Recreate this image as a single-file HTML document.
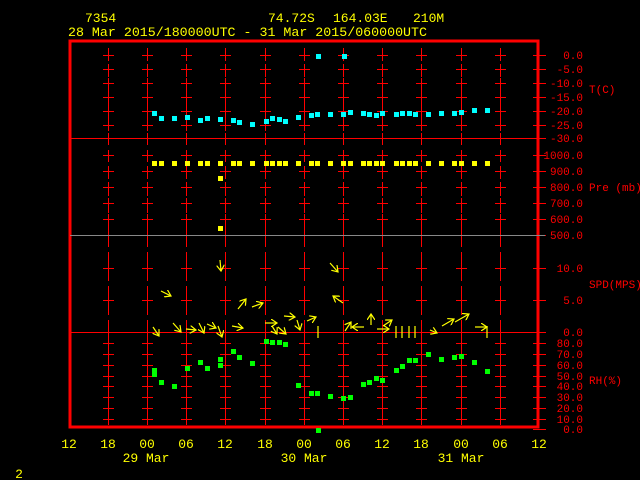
<!DOCTYPE html>
<html><head><meta charset="utf-8"><style>
html,body{margin:0;padding:0;background:#000;width:640px;height:480px;overflow:hidden}
svg{display:block}
text{font-family:"Liberation Mono",monospace}
</style></head><body>
<svg id="s" width="640" height="480" viewBox="0 0 640 480" xmlns="http://www.w3.org/2000/svg">
<defs><marker id="ah" markerWidth="8" markerHeight="8" refX="6" refY="4" orient="auto" markerUnits="userSpaceOnUse"><path d="M0,0 L6,4 L0,8" fill="none" stroke="#ff0" stroke-width="1.2"/></marker></defs>
<g fill="#ff0" font-size="13">
<text x="85" y="22">7354</text>
<text x="268" y="22">74.72S</text>
<text x="333" y="22">164.03E</text>
<text x="413" y="22">210M</text>
<text x="68" y="36" textLength="359" lengthAdjust="spacingAndGlyphs">28 Mar 2015/180000UTC - 31 Mar 2015/060000UTC</text>
</g>
<g id="grid" stroke="#f00" stroke-width="1" shape-rendering="crispEdges"></g>
<rect x="70" y="41" width="468" height="386" fill="none" stroke="#f00" stroke-width="3" shape-rendering="crispEdges"/>
<g stroke="#f00" stroke-width="1" shape-rendering="crispEdges">
<line x1="70" y1="138.5" x2="545" y2="138.5"/>
<line x1="70" y1="235.5" x2="545" y2="235.5" stroke="#888"/>
<line x1="70" y1="332.5" x2="545" y2="332.5"/>
</g>
<g id="lab" fill="#f00" font-size="11" text-anchor="end"></g>
<g fill="#f00" font-size="11">
<text x="589" y="93">T(C)</text>
<text x="589" y="191">Pre (mb)</text>
<text x="589" y="288">SPD(MPS)</text>
<text x="589" y="384">RH(%)</text>
</g>
<g id="pts" shape-rendering="crispEdges"></g>
<g id="wind" stroke="#ff0" stroke-width="1.2" fill="none"></g>
<g fill="#ff0" font-size="13" text-anchor="middle">
<text x="69" y="448">12</text><text x="108" y="448">18</text><text x="147" y="448">00</text><text x="186" y="448">06</text><text x="225" y="448">12</text><text x="265" y="448">18</text><text x="304" y="448">00</text><text x="343" y="448">06</text><text x="382" y="448">12</text><text x="421" y="448">18</text><text x="461" y="448">00</text><text x="500" y="448">06</text><text x="539" y="448">12</text>
<text x="146" y="462">29 Mar</text><text x="304" y="462">30 Mar</text><text x="461" y="462">31 Mar</text>
<text x="19" y="478">2</text>
</g>
</svg>
<script>
var NS="http://www.w3.org/2000/svg";
function el(p,t,a){var e=document.createElementNS(NS,t);for(var k in a)e.setAttribute(k,a[k]);document.getElementById(p).appendChild(e);return e;}
var xs=[108,147,186,225,265,304,343,382,421,461,500];
var ticks=[55,69,83,97,111,125,155,171,187,203,219,235,268,300,332,343,354,365,376,386,397,408,419];
var tv=["0.0","-5.0","-10.0","-15.0","-20.0","-25.0","1000.0","900.0","800.0","700.0","600.0","500.0","10.0","5.0","0.0","80.0","70.0","60.0","50.0","40.0","30.0","20.0","10.0"];
xs.forEach(function(x){
  var xx=x+0.5;
  el("grid","line",{x1:xx,y1:48,x2:xx,y2:425,"stroke-dasharray":"12,5"});
  ticks.forEach(function(y){var yy=y+0.5;el("grid","line",{x1:x-5,y1:yy,x2:x+6,y2:yy});el("grid","line",{x1:xx,y1:y-5,x2:xx,y2:y+6});});
});
ticks.concat([138,429]).forEach(function(y){el("grid","line",{x1:533,y1:y+0.5,x2:546,y2:y+0.5});});
ticks.forEach(function(y,i){var t=el("lab","text",{x:583,y:y+4});t.textContent=tv[i];});
[["-30.0",142],["0.0",433]].forEach(function(a){var t=el("lab","text",{x:583,y:a[1]});t.textContent=a[0];});
var X=[154,161,174,187,200,207,220,233,239,252,266,272,279,285,298,311,317,330,343,350,363,369,376,382,396,402,409,415,428,441,454,461,474,487];
var T=[113,118,118,117,120,118,119,120,122,124,121,118,119,121,117,115,114,114,114,112,113,114,115,113,114,113,113,114,114,113,113,112,110,110];
function sq(x,y,c){el("pts","rect",{x:x-2,y:y-2,width:5,height:5,fill:c});}
X.forEach(function(x,i){sq(x,T[i],"#0ff");sq(x,163,"#ff0");});
sq(318,56,"#0ff");sq(344,56,"#0ff");sq(220,178,"#ff0");sq(220,228,"#ff0");
[[154,370],[154,374],[161,382],[174,386],[187,368],[200,362],[207,368],[220,359],[220,365],[233,351],[239,357],[252,363],[266,341],[272,342],[279,342],[285,344],[298,385],[311,393],[317,393],[330,396],[343,398],[350,397],[363,384],[369,382],[376,378],[382,380],[396,370],[402,366],[409,360],[415,360],[428,354],[441,359],[454,357],[461,356],[474,362],[487,371],[318,430]].forEach(function(p){sq(p[0],p[1],"#0f0");});
[[220,260,221,271],[161,291,171,296],[238,309,246,299],[252,307,263,303],[330,263,338,272],[343,303,333,296],
[153,327,159,336],[173,323,181,332],[186,329,196,330],[199,323,204,333],[207,324,216,328],[218,326,222,337],[232,326,243,328],[265,323,277,323],[272,326,277,334],[278,327,286,334],[284,316,295,317],[297,320,300,330],[307,321,316,317],[345,331,351,322],[364,327,352,327],[371,325,371,314],[377,329,389,329],[383,326,392,320],[430,330,437,333],[442,326,454,319],[455,322,469,314],[475,327,487,327]].forEach(function(a){el("wind","line",{x1:a[0],y1:a[1],x2:a[2],y2:a[3],"marker-end":"url(#ah)"});});
[318,396,402,409,415,487].forEach(function(x){el("wind","line",{x1:x,y1:326,x2:x,y2:338});});
</script>
</body></html>
